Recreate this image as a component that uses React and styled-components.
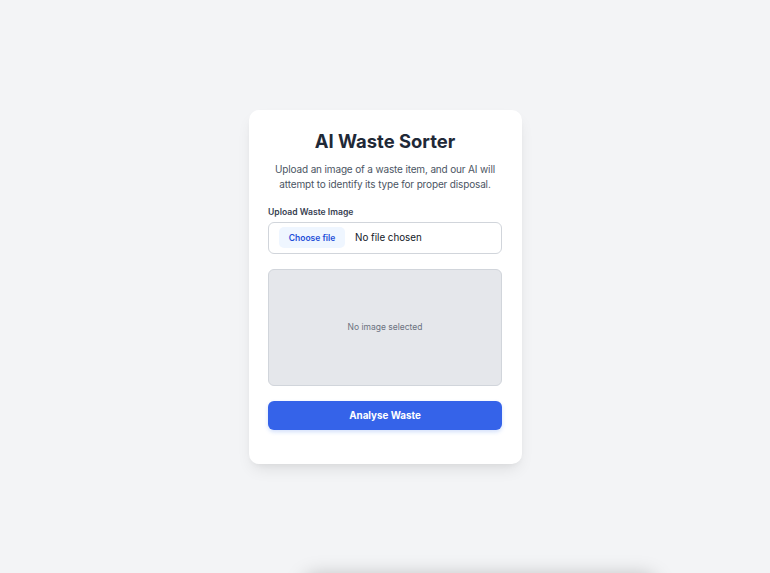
import React from "react";
import styled, { createGlobalStyle } from "styled-components";

const GlobalStyle = createGlobalStyle`
  html, body {
    margin: 0;
    padding: 0;
    background: #f3f4f6;
    font-family: Inter, "Noto Sans", sans-serif;
  }
`;

function App() {
  return (
    <>
      <GlobalStyle />
      <Page>
        <Card>
          <Title>AI Waste Sorter</Title>
          <Intro>
            Upload an image of a waste item, and our AI will attempt to
            identify its type for proper disposal.
          </Intro>
          <Field>
            <Label>Upload Waste Image</Label>
            <FileBox>
              <ChooseButton>Choose file</ChooseButton>
              <FileName>No file chosen</FileName>
            </FileBox>
          </Field>
          <Preview>
            <PreviewText>No image selected</PreviewText>
          </Preview>
          <AnalyseButton>Analyse Waste</AnalyseButton>
        </Card>
      </Page>
      <ResultPeek />
    </>
  );
}

const Page = styled.div`
  height: 573px;
  display: flex;
  align-items: center;
  justify-content: center;
`;

const Card = styled.div`
  width: 234px;
  padding: 19px 19.5px 34px;
  background: #ffffff;
  border-radius: 10px;
  box-shadow: 0 8px 16px -4px rgba(0, 0, 0, 0.1), 0 3px 6px -3px rgba(0, 0, 0, 0.06);
  display: flex;
  flex-direction: column;
`;

const Title = styled.h1`
  margin: 0;
  font-size: 18.4px;
  line-height: 24px;
  font-weight: 700;
  color: #1f2937;
  text-align: center;
`;

const Intro = styled.p`
  margin: 9px -4px 0;
  font-size: 10px;
  letter-spacing: -0.15px;
  line-height: 15px;
  color: #4b5563;
  text-align: center;
`;

const Field = styled.div`
  margin-top: 14px;
  display: flex;
  flex-direction: column;
`;

const Label = styled.span`
  font-size: 8.6px;
  line-height: 12px;
  font-weight: 600;
  color: #374151;
`;

const FileBox = styled.div`
  margin-top: 4px;
  height: 30px;
  border: 1px solid #d1d5db;
  border-radius: 6px;
  display: flex;
  align-items: center;
  padding: 0 10px;
`;

const ChooseButton = styled.span`
  height: 21px;
  width: 66px;
  border-radius: 5px;
  background: #eff6ff;
  color: #1d4ed8;
  font-size: 8.5px;
  font-weight: 600;
  display: flex;
  align-items: center;
  justify-content: center;
`;

const FileName = styled.span`
  margin-left: 10px;
  font-size: 9.8px;
  color: #111827;
`;

const Preview = styled.div`
  margin-top: 15px;
  height: 115px;
  border: 1px solid #d1d5db;
  border-radius: 6px;
  background: #e5e7eb;
  display: flex;
  align-items: center;
  justify-content: center;
`;

const PreviewText = styled.span`
  font-size: 8.5px;
  color: #6b7280;
`;

const AnalyseButton = styled.button`
  margin-top: 15px;
  height: 29px;
  border: none;
  border-radius: 6px;
  background: #3563e9;
  color: #ffffff;
  font-family: Inter, "Noto Sans", sans-serif;
  font-size: 9.8px;
  font-weight: 700;
  box-shadow: 0 2px 4px rgba(37, 99, 235, 0.2);
  cursor: pointer;
`;

const ResultPeek = styled.div`
  position: fixed;
  left: 305px;
  width: 350px;
  top: 580px;
  height: 60px;
  background: #ffffff;
  box-shadow: 0 -4px 20px rgba(0, 0, 0, 0.25);
  border-radius: 10px;
`;

export default App;
